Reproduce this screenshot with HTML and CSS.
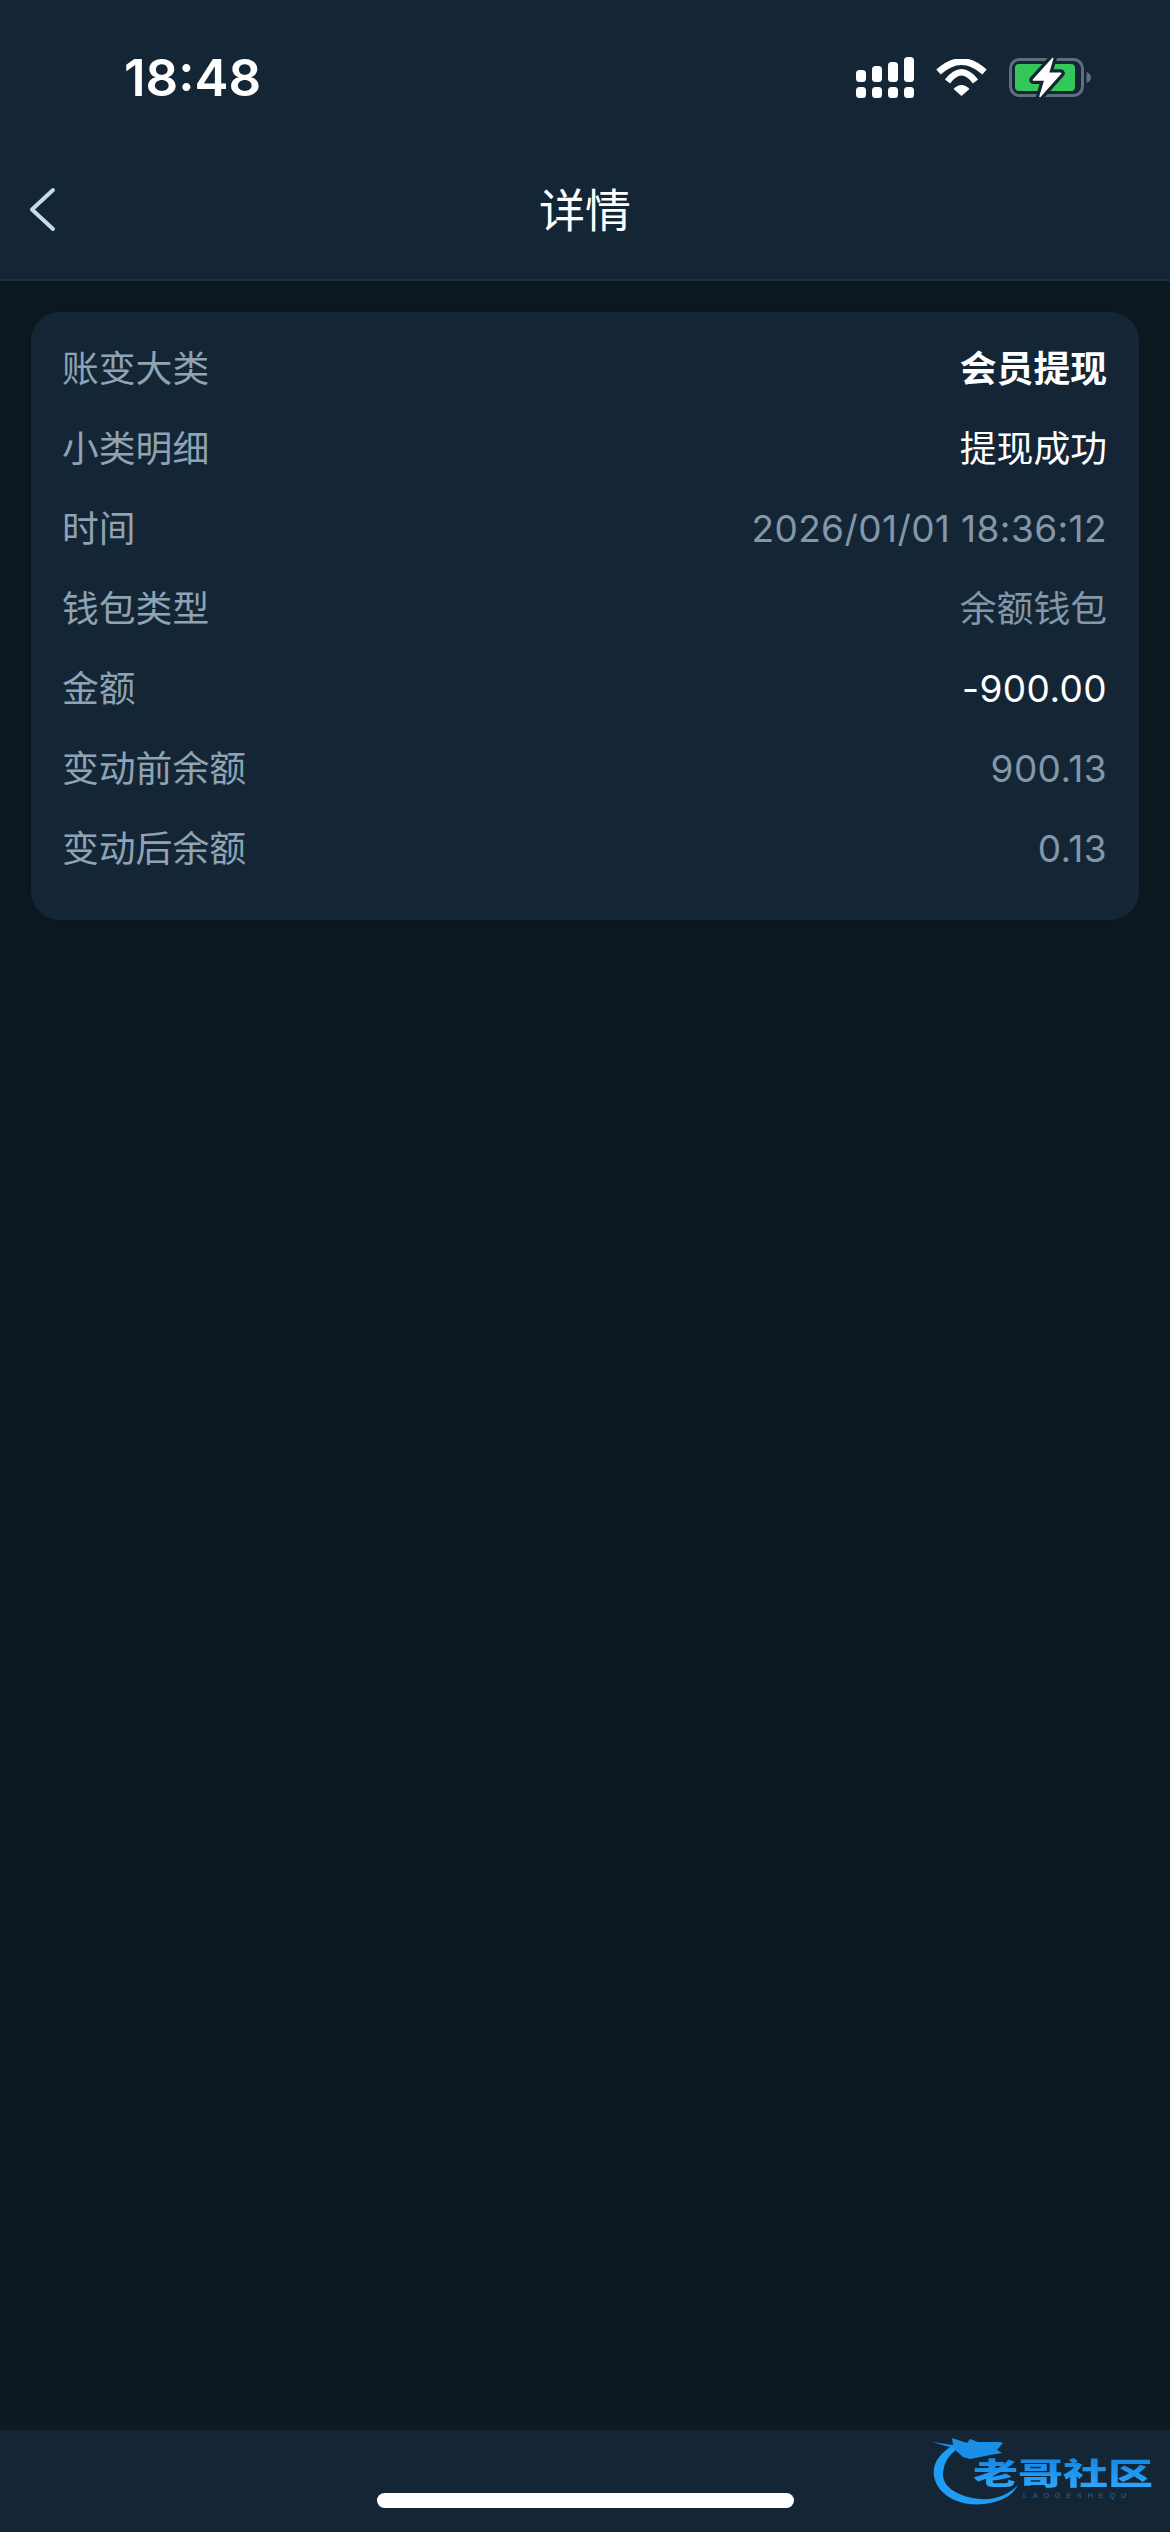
FILE: index.html
```html
<!DOCTYPE html>
<html lang="zh-CN">
<head>
    <meta charset="UTF-8">
    <meta name="viewport" content="width=device-width, initial-scale=1.0">
    <title>详情</title>
    <link rel="stylesheet" href="styles.css">
</head>
<body>
    <!-- 顶部 -->
    <header class="top">
        <div class="status-bar">
            <span class="clock">18:48</span>
            <div class="status-icons">
                <svg class="icon-signal" width="58" height="41" viewBox="0 0 58 41" fill="#fff">
                    <rect x="0" y="13" width="10" height="12" rx="3.5"/>
                    <rect x="16" y="9" width="10" height="16" rx="3.5"/>
                    <rect x="32" y="5" width="10" height="20" rx="3.5"/>
                    <rect x="48" y="0" width="10" height="25" rx="3.5"/>
                    <rect x="0" y="30" width="10" height="11" rx="3.5"/>
                    <rect x="16" y="30" width="10" height="11" rx="3.5"/>
                    <rect x="32" y="30" width="10" height="11" rx="3.5"/>
                    <rect x="48" y="30" width="10" height="11" rx="3.5"/>
                </svg>
                <svg class="icon-wifi" width="51" height="37" viewBox="0 0 51 37" fill="none">
                    <path d="M2.5 13Q25.5 -8 48.5 13" stroke="#fff" stroke-width="6.5"/>
                    <path d="M11.5 22.5Q25.5 4 39.5 22.5" stroke="#fff" stroke-width="6.5"/>
                    <path d="M17.5 30Q25.5 22 33.5 30L25.5 37Z" fill="#fff"/>
                </svg>
                <svg class="icon-battery" width="82" height="41" viewBox="0 0 82 41" fill="none">
                    <rect x="1.5" y="2.5" width="72" height="36" rx="9" stroke="#5f6e7b" stroke-width="3"/>
                    <rect x="6" y="7" width="60" height="27" rx="4" fill="#34c759"/>
                    <path d="M77.5 15C80.5 16 82 18 82 20.5S80.5 25 77.5 26Z" fill="#5f6e7b"/>
                    <path d="M43.7 1.5L24.3 23H36L31 39.5L51.7 16.3H39.3Z" stroke="#142636" stroke-width="8" stroke-linejoin="round"/>
                    <path d="M43.7 1.5L24.3 23H36L31 39.5L51.7 16.3H39.3Z" fill="#fff" stroke="#fff" stroke-width="1.5" stroke-linejoin="round"/>
                </svg>
            </div>
        </div>
        <div class="nav-bar">
            <svg class="back" width="29" height="45" viewBox="0 0 29 45" fill="none">
                <path d="M26 3L5 22.5L26 42" stroke="#c2dcee" stroke-width="4" stroke-linecap="round" stroke-linejoin="round"/>
            </svg>
            <h1 class="title">详情</h1>
        </div>
    </header>

    <!-- 内容 -->
    <main class="content">
        <div class="card">
            <div class="row"><span class="label">账变大类</span><span class="val val-strong">会员提现</span></div>
            <div class="row"><span class="label">小类明细</span><span class="val val-white">提现成功</span></div>
            <div class="row"><span class="label">时间</span><span class="val num">2026/01/01 18:36:12</span></div>
            <div class="row"><span class="label">钱包类型</span><span class="val">余额钱包</span></div>
            <div class="row"><span class="label">金额</span><span class="val val-white num">-900.00</span></div>
            <div class="row"><span class="label">变动前余额</span><span class="val num">900.13</span></div>
            <div class="row"><span class="label">变动后余额</span><span class="val num">0.13</span></div>
        </div>
    </main>

    <!-- 底部 -->
    <footer class="bottom">
        <div class="home-bar"></div>
        <svg class="watermark" width="226" height="78" viewBox="0 0 226 78">
            <defs>
                <linearGradient id="logoText" x1="0" y1="0" x2="0" y2="1">
                    <stop offset="0" stop-color="#0f7fdc"/>
                    <stop offset="0.55" stop-color="#1e96f0"/>
                    <stop offset="1" stop-color="#33adff"/>
                </linearGradient>
            </defs>
            <path d="M23 15C9 24 2 34 4 46C7 66 32 77 54 74C72 72 83 65 88 55C78 65 66 70 50 69C30 67 12 58 13 43C14 33 18 26 27 19Z" fill="#1f9cf5"/>
            <path d="M2 12L23 15L22 8L37 13L40 9L48 12L70 12L73 13L67 20L72 23L60 25L40 29L33 27L23 18Z" fill="#1a8fe8"/>
            <text class="logo-cn" transform="translate(43 54) scale(1.5 1)" fill="url(#logoText)">老哥社区</text>
            <text class="logo-en" x="93" y="68" fill="#1670b8">LAOGESHEQU</text>
        </svg>
    </footer>
</body>
</html>
```

FILE: styles.css
```css
* {
    margin: 0;
    padding: 0;
    box-sizing: border-box;
}

body {
    width: 1170px;
    height: 2532px;
    display: flex;
    flex-direction: column;
    background: #0d1921;
    font-family: Inter, "Noto Sans CJK SC", sans-serif;
    overflow: hidden;
}

.top {
    height: 281px;
    background: #142636;
    border-bottom: 2px solid #1a3247;
}

.status-bar {
    height: 150px;
    padding: 57px 79px 0 124px;
    display: flex;
    justify-content: space-between;
    align-items: flex-start;
}

.clock {
    font-size: 51px;
    line-height: 41px;
    font-weight: 600;
    color: #fff;
}

.status-icons {
    display: flex;
    align-items: flex-start;
    gap: 22px;
}

.icon-wifi {
    margin-top: 2px;
}

.nav-bar {
    height: 129px;
    position: relative;
    display: flex;
    justify-content: center;
    align-items: flex-start;
}

.back {
    position: absolute;
    left: 27px;
    top: 37px;
}

.title {
    font-size: 46px;
    line-height: 120px;
    font-weight: 400;
    color: #fff;
}

.content {
    flex: 1;
    padding: 31px 31px 0;
}

.card {
    background: #142636;
    border-radius: 28px;
    padding: 14px 32px 34px 31px;
    box-shadow: 0 0 24px rgba(0, 0, 0, 0.22);
}

.row {
    height: 80px;
    display: flex;
    justify-content: space-between;
    align-items: center;
    font-size: 36.8px;
}

.label {
    color: #8fa3b3;
}

.val {
    color: #8397a8;
}

.val-white {
    color: #fff;
}

.val-strong {
    color: #fff;
    font-weight: 700;
}

.num {
    font-size: 37px;
    letter-spacing: 0.4px;
    padding-top: 5px;
}

.bottom {
    height: 102px;
    background: #142636;
    position: relative;
}

.home-bar {
    width: 417px;
    height: 15px;
    margin: 63px auto 0;
    background: #fff;
    border-radius: 8px;
}

.watermark {
    position: absolute;
    left: 930px;
    top: 0;
    filter: blur(0.5px);
}

.logo-cn {
    font-family: "Noto Sans CJK SC", sans-serif;
    font-size: 30px;
    font-weight: 900;
}

.logo-en {
    font-family: "Liberation Sans", sans-serif;
    font-size: 7px;
    letter-spacing: 6px;
}
```
